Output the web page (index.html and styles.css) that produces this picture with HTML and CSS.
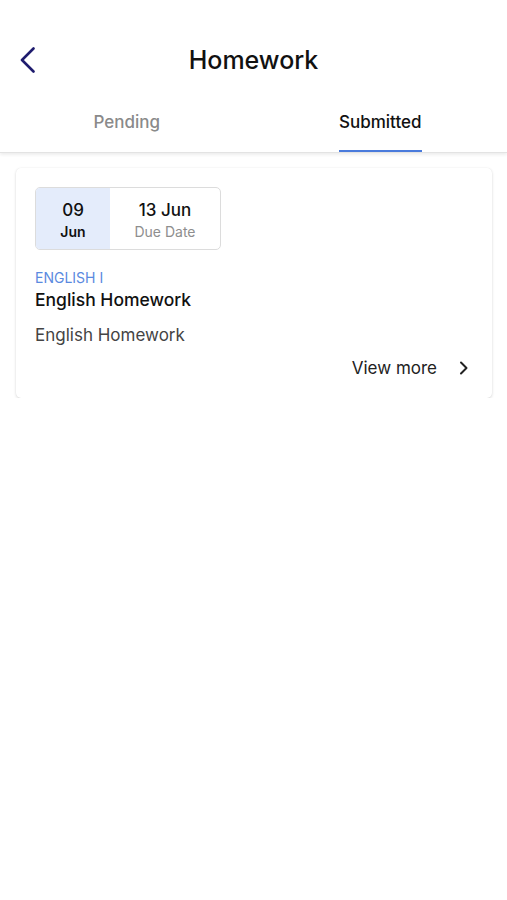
FILE: index.html
```html
<!DOCTYPE html>
<html lang="en">
<head>
<meta charset="utf-8">
<title>Homework</title>
<link rel="stylesheet" href="styles.css">
</head>
<body>
<header class="topbar">
  <button class="back" aria-label="Back">
    <svg width="18" height="26" viewBox="0 0 18 26"><path d="M14.5 1.5 L3 13 L14.5 24.5" fill="none" stroke="#1f1c6e" stroke-width="2.6" stroke-linecap="round" stroke-linejoin="round"/></svg>
  </button>
  <h1 class="title">Homework</h1>
  <span></span>
</header>
<nav class="tabs">
  <div class="tab"><span class="tab-label">Pending</span></div>
  <div class="tab active"><span class="tab-label">Submitted</span></div>
</nav>
<main class="content">
  <article class="card">
    <div class="dates">
      <div class="date date-given">
        <span class="date-main">09</span>
        <span class="date-sub">Jun</span>
      </div>
      <div class="date date-due">
        <span class="date-main">13 Jun</span>
        <span class="date-sub muted">Due Date</span>
      </div>
    </div>
    <div class="subject">ENGLISH I</div>
    <div class="hw-title">English Homework</div>
    <div class="hw-desc">English Homework</div>
    <div class="more">
      <span>View more</span>
      <svg width="10" height="14" viewBox="0 0 10 14"><path d="M2 1.5 L7.5 7 L2 12.5" fill="none" stroke="#222" stroke-width="2" stroke-linecap="round" stroke-linejoin="round"/></svg>
    </div>
  </article>
</main>
</body>
</html>
```
FILE: styles.css
```css
* { box-sizing: border-box; }
html, body { margin: 0; padding: 0; background: #fff; }
body {
  font-family: "Inter", "Open Sans", sans-serif;
  color: #1a1a1a;
  width: 507px;
}
.topbar {
  display: grid;
  grid-template-columns: 1fr auto 1fr;
  align-items: center;
  height: 92px;
  padding-top: 28px;
}
.back {
  justify-self: start;
  background: none;
  border: 0;
  padding: 0;
  margin-left: 19px;
  display: flex;
  align-items: center;
  height: 26px;
}
.title {
  margin: 0;
  padding-top: 0;
  font-size: 25px;
  font-weight: 500;
  color: #111;
  letter-spacing: 0;
  line-height: 32px;
}
.tabs {
  display: grid;
  grid-template-columns: 1fr 1fr;
  height: 61px;
  border-bottom: 1px solid #e3e3e3;
  box-shadow: 0 2px 3px rgba(0,0,0,0.07);
}
.tab {
  display: flex;
  justify-content: center;
}
.tab-label {
  padding-top: 19px;
  padding-bottom: 17px;
  line-height: 22px;
  font-size: 17px;
  font-weight: 500;
  color: #8a8a8a;
  border-bottom: 2px solid transparent;
  height: 60px;
}
.tab.active .tab-label {
  color: #111;
  border-bottom: 2.5px solid #4a7bdc;
}
.content {
  padding: 15px 15px 0 16px;
}
.card {
  background: #fff;
  border-radius: 5px;
  box-shadow: 0 1px 3px rgba(0,0,0,0.15), 0 0 1px rgba(0,0,0,0.08);
  padding: 19px 23px 19px 19px;
}
.dates {
  display: flex;
  width: 186px;
  height: 63px;
  border: 1px solid #dcdcdc;
  border-radius: 5px;
  overflow: hidden;
}
.date {
  display: flex;
  flex-direction: column;
  align-items: center;
  padding-top: 11px;
}
.date-given {
  width: 74px;
  background: #e4ecfb;
}
.date-due {
  flex: 1;
}
.date-main {
  font-size: 17px;
  font-weight: 500;
  line-height: 22px;
  color: #111;
}
.date-sub {
  font-size: 14px;
  font-weight: 600;
  line-height: 22px;
  color: #111;
}
.date-sub.muted {
  font-weight: 400;
  color: #8e8e8e;
}
.subject {
  margin-top: 18px;
  font-size: 14px;
  line-height: 20px;
  color: #5a8ae0;
}
.hw-title {
  margin-top: 1px;
  font-size: 17.5px;
  font-weight: 500;
  line-height: 22px;
  color: #111;
}
.hw-desc {
  margin-top: 13px;
  font-size: 17px;
  line-height: 22px;
  color: #444;
}
.more {
  margin-top: 11px;
  display: flex;
  justify-content: flex-end;
  align-items: center;
  gap: 22px;
  font-size: 17px;
  line-height: 22px;
  color: #222;
}
.more svg { display: block; }
```
